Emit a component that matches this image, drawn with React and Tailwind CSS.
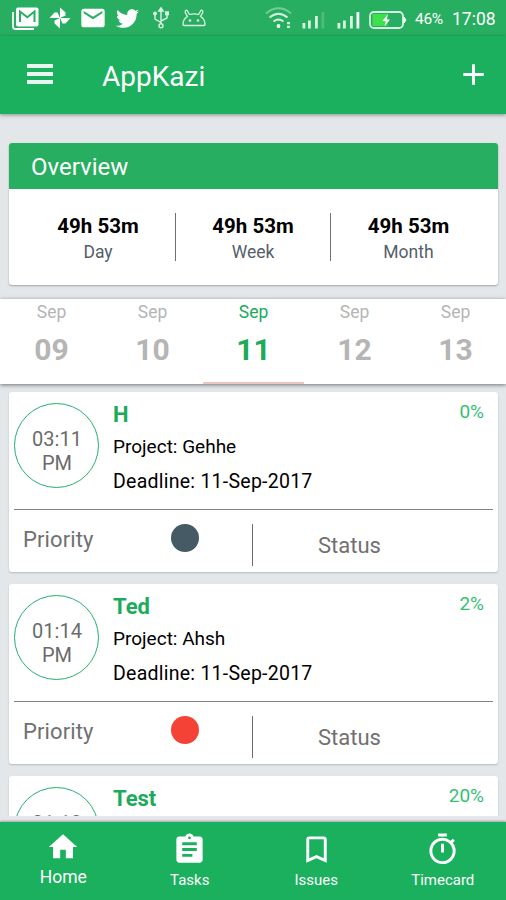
// src/App.jsx
import React, { useState } from 'react';
import { MdAdd, MdAssignment, MdBookmarkBorder, MdEmail, MdHome, MdOutlineTimer } from 'react-icons/md';
import { FaTwitter } from 'react-icons/fa';

const totals = [
  { label: 'Day', value: '49h 53m' },
  { label: 'Week', value: '49h 53m' },
  { label: 'Month', value: '49h 53m' },
];

const days = ['09', '10', '11', '12', '13'];

const tasks = [
  { name: 'H', project: 'Gehhe', deadline: '11-Sep-2017', time: '03:11', progress: '0%', dot: 'bg-[#455a64]' },
  { name: 'Ted', project: 'Ahsh', deadline: '11-Sep-2017', time: '01:14', progress: '2%', dot: 'bg-[#f44336]' },
  { name: 'Test', time: '01:13', progress: '20%' },
];

const tabs = [
  { name: 'Home', icon: MdHome },
  { name: 'Tasks', icon: MdAssignment },
  { name: 'Issues', icon: MdBookmarkBorder },
  { name: 'Timecard', icon: MdOutlineTimer },
];

function GmailIcon() {
  return (
    <svg width="27" height="23" viewBox="0 0 27 23" fill="none">
      <path d="M1 5v14.500q0 2.500 2.500 2.500H22" stroke="white" strokeWidth="1.800" />
      <rect x="4" y="0.500" width="22.500" height="19" rx="2" fill="white" />
      <path d="M8 15V4.500l7.300 5.800L22.500 4.500V15" stroke="#27ae60" strokeWidth="2" />
    </svg>
  );
}

function PinwheelIcon() {
  return (
    <svg width="22" height="22" viewBox="0 0 22 22" fill="white">
      <path d="M11 11V0.500L16.500 5.500V8.500z" />
      <path d="M11 11H21.500L16.500 16.500H13.500z" />
      <path d="M11 11V21.500L5.500 16.500V13.500z" />
      <path d="M11 11H0.500L5.500 5.500H8.500z" />
    </svg>
  );
}

function UsbIcon() {
  return (
    <svg width="18" height="22" viewBox="0 0 18 22" fill="none" stroke="#d9f3e2" strokeWidth="1.400">
      <path d="M9 3v14M9 15.500L3 12V7.500M9 14l6-3V7" />
      <path d="M6.800 4L9 0.800 11.200 4z" fill="#d9f3e2" />
      <circle cx="9" cy="18.800" r="2" />
      <circle cx="3" cy="6.500" r="1.300" fill="#d9f3e2" />
      <rect x="13.700" y="5" width="2.600" height="2.600" fill="#d9f3e2" />
    </svg>
  );
}

function DroidIcon() {
  return (
    <svg width="24" height="18" viewBox="0 0 24 18" fill="none" stroke="#d9f3e2" strokeWidth="1.300">
      <path d="M1 15.500C1 11.500 3 9 5.500 7.500L3.200 3.500Q3 1 5 1.300L7.500 5.500q4.500-1.300 9 0L19 1.300Q21 1 20.800 3.500L18.500 7.500C21 9 23 11.500 23 15.500q0 1-1 1H2q-1 0-1-1z" />
      <circle cx="8" cy="11.500" r="0.700" fill="#d9f3e2" />
      <circle cx="16" cy="11.500" r="0.700" fill="#d9f3e2" />
    </svg>
  );
}

function WifiIcon() {
  return (
    <svg width="28" height="22" viewBox="0 0 28 22" fill="none" strokeWidth="1.800">
      <path d="M1 6.500Q13.500-4 26 6.500" stroke="#74cd97" />
      <path d="M4.500 10.500q9-7.500 18 0" stroke="#d9f3e2" />
      <path d="M8.500 14.500q5-4 10 0" stroke="#d9f3e2" />
      <circle cx="13.500" cy="19" r="1.900" fill="white" />
      <path d="M23.500 15v2.200M23.500 18.700v2.200" stroke="#d9f3e2" strokeWidth="2.800" />
    </svg>
  );
}

function SignalIcon({ full }) {
  return (
    <svg width="24" height="18" viewBox="0 0 24 18" fill="#d9f3e2">
      <rect x="0.500" y="12" width="2.800" height="5.500" />
      <rect x="6" y="9.500" width="2.800" height="8" />
      <rect x="13" y="5" width="2.800" height="12.500" />
      <rect x="19.500" y="1" width="2.800" height="16.500" fill={full ? '#ffffff' : '#4dbd7b'} />
    </svg>
  );
}

function BatteryIcon() {
  return (
    <svg width="38" height="18" viewBox="0 0 38 18" fill="none">
      <rect x="3.500" y="3" width="15" height="12" fill="#3ee04f" />
      <rect x="1" y="1" width="33" height="16" rx="4" stroke="#d9f3e2" strokeWidth="1.800" />
      <path d="M35 6l2 3-2 3z" fill="white" stroke="white" />
      <path d="M19 3l-5.500 7h3.200l-1.200 5.200L21 8.500h-3.200z" fill="white" />
    </svg>
  );
}

function StatusBar() {
  return (
    <div className="h-9 shrink-0 bg-[#27ae60] text-white flex items-center pl-[12px] pr-[11px]">
      <GmailIcon />
      <div className="ml-[10px]"><PinwheelIcon /></div>
      <MdEmail size={28} className="ml-[8px]" />
      <FaTwitter size={23} className="ml-[9px]" />
      <div className="ml-[13px]"><UsbIcon /></div>
      <div className="ml-[12px]"><DroidIcon /></div>
      <div className="ml-auto"><WifiIcon /></div>
      <div className="ml-[9px] mt-[3px]"><SignalIcon /></div>
      <div className="ml-[11px] mt-[3px]"><SignalIcon full /></div>
      <div className="ml-[8px] mt-[3px]"><BatteryIcon /></div>
      <span className="ml-[8px] mt-[2px] w-[29px] text-[15.500px] leading-5 tracking-[-0.300px]">46%</span>
      <span className="ml-[8px] mt-[2px] w-[43px] text-[17.500px] leading-5">17:08</span>
    </div>
  );
}

function AppBar() {
  return (
    <header className="relative z-10 h-[78px] shrink-0 bg-[#1bb05e] text-white flex items-center pl-[27px] pr-[15px] shadow-[0_1px_4px_rgba(0,0,0,0.4)]">
      <button className="flex flex-col gap-[4px] mb-[2px]">
        <span className="block w-[26px] h-[4px] bg-white/90"></span>
        <span className="block w-[26px] h-[4px] bg-white/90"></span>
        <span className="block w-[26px] h-[4px] bg-white/90"></span>
      </button>
      <h1 className="ml-[49px] text-[28px] leading-8 mb-[-3px]">AppKazi</h1>
      <MdAdd size={35} className="ml-auto mb-px" />
    </header>
  );
}

function Overview() {
  return (
    <section className="ml-[9px] mr-[8px] mt-[29px] h-[142px] shrink-0 rounded-[3px] bg-white shadow-[0_1px_2px_rgba(0,0,0,0.3)] overflow-hidden">
      <h2 className="h-[46px] bg-[#27ae60] text-white text-[24px] leading-[48px] pl-[22px]">Overview</h2>
      <div className="grid grid-cols-3 px-[12px] pt-[24px]">
        {totals.map((t, i) => (
          <div key={t.label} className={`h-[48px] text-center ${i < 2 ? 'border-r border-[#6b7275]' : ''}`}>
            <p className="text-[20.500px] leading-[26px] font-bold text-black">{t.value}</p>
            <p className="text-[17.500px] leading-[26px] text-[#546069]">{t.label}</p>
          </div>
        ))}
      </div>
    </section>
  );
}

function DayStrip({ selected, onSelect }) {
  return (
    <div className="relative z-10 mt-[14px] h-[85px] shrink-0 bg-white grid grid-cols-5 pl-px shadow-[0_1px_4px_rgba(0,0,0,0.5)]">
      {days.map((day) => (
        <button
          key={day}
          onClick={() => onSelect(day)}
          className={`flex flex-col items-center pt-[3px] border-b-2 ${selected === day ? 'text-[#1bab5a] border-[#f0c4bf]' : 'text-[#b5b5b5] border-transparent'}`}
        >
          <span className="text-[17.500px] leading-5">Sep</span>
          <span className="mt-[13px] text-[30px] leading-[30px] font-bold">{day}</span>
        </button>
      ))}
    </div>
  );
}

function TaskCard({ task }) {
  return (
    <article className="h-[180px] shrink-0 rounded-[3px] bg-white shadow-[0_1px_2px_rgba(0,0,0,0.2)] px-[5px]">
      <div className="h-[117px] flex pt-[11px]">
        <div className="w-[85px] h-[85px] shrink-0 rounded-full border-[1.500px] border-[#27ae72] flex flex-col items-center text-[20px] leading-[24px] pt-[23px] pl-px text-[#6b6b6b]">
          <span>{task.time}</span>
          {task.project && <span>PM</span>}
        </div>
        <div className="ml-[14px] flex-1 whitespace-nowrap text-black">
          <div className="flex justify-between pr-[9px] text-[#1bab5a]">
            <h3 className="text-[22px] leading-[23px] font-bold">{task.name}</h3>
            <span className="text-[19px] leading-[18px] text-[#35c173]">{task.progress}</span>
          </div>
          {task.project && (
            <>
              <p className="mt-[9px] text-[19px] leading-6">Project: {task.project}</p>
              <p className="mt-[11px] text-[19.500px] leading-6 tracking-[0.250px]">Deadline: {task.deadline}</p>
            </>
          )}
        </div>
      </div>
      {task.project && (
        <div className="border-t border-[#808080] h-[62px] flex pt-[14px] text-[22px] text-[#707070]">
          <div className="w-[239px] h-[42px] flex justify-between items-start pl-[9px] pr-[53px] border-r border-[#6b6b6b]">
            <span className="leading-[32px] tracking-[0.100px]">Priority</span>
            <span className={`w-[28px] h-[28px] rounded-full ${task.dot}`}></span>
          </div>
          <span className="ml-[65px] leading-[44px]">Status</span>
        </div>
      )}
    </article>
  );
}

function BottomNav({ active, setActive }) {
  return (
    <nav className="h-[78px] shrink-0 bg-[#1bb05e] text-white grid grid-cols-4 shadow-[0_-1px_2px_rgba(0,0,0,0.3)]">
      {tabs.map(({ name, icon: Icon }) => (
        <button key={name} onClick={() => setActive(name)} className={`flex flex-col items-center ${active === name ? 'pt-[8px]' : 'pt-[10px]'}`}>
          <Icon size={active === name ? 34 : 35} />
          <span className={active === name ? 'mt-[3px] text-[17.500px] leading-5' : 'mt-[3px] text-[15px] leading-5'}>{name}</span>
        </button>
      ))}
    </nav>
  );
}

function App() {
  const [tab, setTab] = useState('Home');
  const [day, setDay] = useState('11');

  return (
    <div className="w-[506px] h-[900px] flex flex-col overflow-hidden bg-[#e3e7ea] font-[Roboto,sans-serif]">
      <StatusBar />
      <AppBar />
      <Overview />
      <DayStrip selected={day} onSelect={setDay} />
      <main className="flex-1 min-h-0 overflow-hidden flex flex-col gap-[12px] pl-[9px] pr-[8px] pt-[8px] mb-[6px]">
        {tasks.map((task) => <TaskCard key={task.name} task={task} />)}
      </main>
      <BottomNav active={tab} setActive={setTab} />
    </div>
  );
}

export default App;
